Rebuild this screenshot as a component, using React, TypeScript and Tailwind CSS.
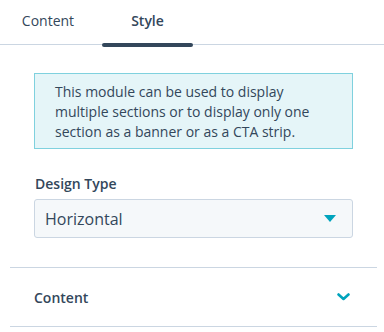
import React from "react";

export default function App() {
  return (
    <div
      className="w-[384px] h-[332px] bg-white text-[#33475b] overflow-hidden"
      style={{ fontFamily: '"Open Sans", "Liberation Sans", sans-serif' }}
    >
      <div className="flex h-[45px] border-b border-[#cbd6e2]">
        <div className="w-[96px] flex items-center justify-center text-[14px] pb-[4px] text-[#33475b]">
          Content
        </div>
        <div className="w-[6px]" />
        <div className="relative w-[91px] flex items-center justify-center text-[14px] font-semibold pb-[4px]">
          Style
          <div className="absolute left-0 right-0 bottom-[-3px] h-[4px] rounded-full bg-[#33475b]" />
        </div>
      </div>
      <div className="px-[34px] pr-[31px] pt-[28px]">
        <div className="border border-[#7fd1de] bg-[#e5f5f8] pl-[20px] pr-[10px] pt-[8px] pb-[6px] text-[14px] leading-[20px] text-[#33475b]">
          This module can be used to display
          <br />
          multiple sections or to display only one
          <br />
          section as a banner or as a CTA strip.
        </div>
        <div className="mt-[25px] text-[14px] leading-[20px] font-semibold pl-[1px]">
          Design Type
        </div>
        <div className="mt-[5px] h-[39px] flex items-center justify-between bg-[#f5f8fa] border border-[#cbd6e2] rounded-[3px] pl-[10px] pr-[16px]">
          <span className="text-[16px]">Horizontal</span>
          <svg width="12" height="7" viewBox="0 0 12 7">
            <path d="M0 0 L12 0 L6 7 Z" fill="#00a4bd" />
          </svg>
        </div>
      </div>
      <div className="ml-[10px] mr-[7px] mt-[29px] border-t border-b border-[#cbd6e2] h-[60px] flex items-center justify-between pl-[24px] pr-[27px]">
        <span className="text-[14px] font-semibold">Content</span>
        <svg width="13" height="8" viewBox="0 0 13 8">
          <path
            d="M1.5 1.5 L6.5 6 L11.5 1.5"
            fill="none"
            stroke="#00a4bd"
            strokeWidth="2.6"
            strokeLinecap="round"
            strokeLinejoin="round"
          />
        </svg>
      </div>
    </div>
  );
}
